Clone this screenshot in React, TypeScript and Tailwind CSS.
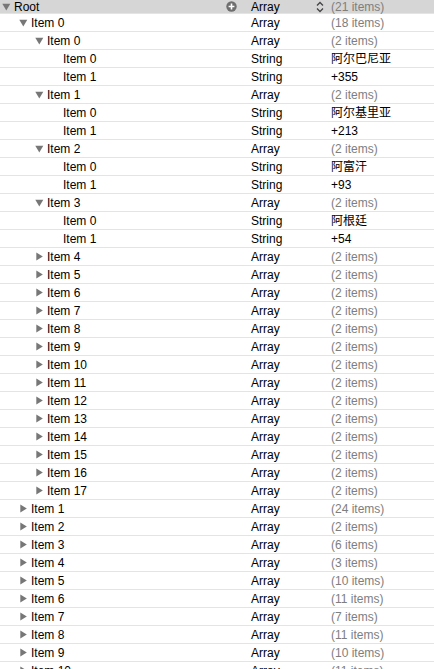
import React from "react";

type Row = {
  key: string;
  level: number;
  open?: boolean;
  leaf?: boolean;
  type: string;
  value: string;
};

const pads = ["pl-[2px]", "pl-[19px]", "pl-[35px]", "pl-[51px]"];

const countries: [string, string][] = [
  ["阿尔巴尼亚", "+355"],
  ["阿尔基里亚", "+213"],
  ["阿富汗", "+93"],
  ["阿根廷", "+54"],
];

const rows: Row[] = [
  { key: "Root", level: 0, open: true, type: "Array", value: "(21 items)" },
  { key: "Item 0", level: 1, open: true, type: "Array", value: "(18 items)" },
];
countries.forEach(([name, code], i) => {
  rows.push({ key: `Item ${i}`, level: 2, open: true, type: "Array", value: "(2 items)" });
  rows.push({ key: "Item 0", level: 3, leaf: true, type: "String", value: name });
  rows.push({ key: "Item 1", level: 3, leaf: true, type: "String", value: code });
});
for (let i = 4; i <= 17; i++) {
  rows.push({ key: `Item ${i}`, level: 2, type: "Array", value: "(2 items)" });
}
const counts = [24, 2, 6, 3, 10, 11, 7, 11, 10, 11];
counts.forEach((n, i) => {
  rows.push({ key: `Item ${i + 1}`, level: 1, type: "Array", value: `(${n} items)` });
});

function Disclosure({ open }: { open?: boolean }) {
  if (open) {
    return (
      <svg width="11" height="8" viewBox="0 0 11 8" className="shrink-0">
        <path d="M0.3 0.8 L8.3 0.8 L4.3 7.6 Z" fill="#777" />
      </svg>
    );
  }
  return (
    <svg width="11" height="9" viewBox="0 0 11 9" className="shrink-0">
      <path d="M1.3 0.5 L7.8 4.5 L1.3 8.5 Z" fill="#777" />
    </svg>
  );
}

export default function App() {
  return (
    <div
      className="w-[434px] h-[669px] overflow-hidden bg-white text-[12px] text-black"
      style={{ fontFamily: '"Liberation Sans", "Noto Sans CJK SC", sans-serif' }}
    >
      <div className="flex flex-col">
        {rows.map((r, i) => {
          const root = i === 0;
          const isCount = r.value.startsWith("(");
          return (
            <div
              key={i}
              className={`flex shrink-0 items-center border-b border-[#e4e4e4] ${
                root ? "h-[14px] bg-[#d6d6d6] leading-[12px]" : "h-[18px] bg-white"
              }`}
            >
              <div className={`flex w-[251px] items-center ${pads[r.level]}`}>
                {r.leaf ? <span className="w-[11px]" /> : <Disclosure open={r.open} />}
                <span className="ml-[1px]">{r.key}</span>
                {root && (
                  <svg width="11" height="11" viewBox="0 0 11 11" className="ml-auto mr-[14px]">
                    <circle cx="5.5" cy="5.5" r="5.2" fill="#6e6e6e" />
                    <path d="M5.5 2.6 V8.4 M2.6 5.5 H8.4" stroke="#fff" strokeWidth="1.6" />
                  </svg>
                )}
              </div>
              <div className="flex w-[80px] items-center">
                <span>{r.type}</span>
                {root && (
                  <svg width="8" height="12" viewBox="0 0 8 12" className="ml-auto mr-[7px]">
                    <path
                      d="M1 4.5 L4 1.5 L7 4.5 M1 7.5 L4 10.5 L7 7.5"
                      fill="none"
                      stroke="#444"
                      strokeWidth="1.3"
                    />
                  </svg>
                )}
              </div>
              <div className={isCount ? "text-[#7e7e7e]" : "text-black"}>{r.value}</div>
            </div>
          );
        })}
      </div>
    </div>
  );
}
